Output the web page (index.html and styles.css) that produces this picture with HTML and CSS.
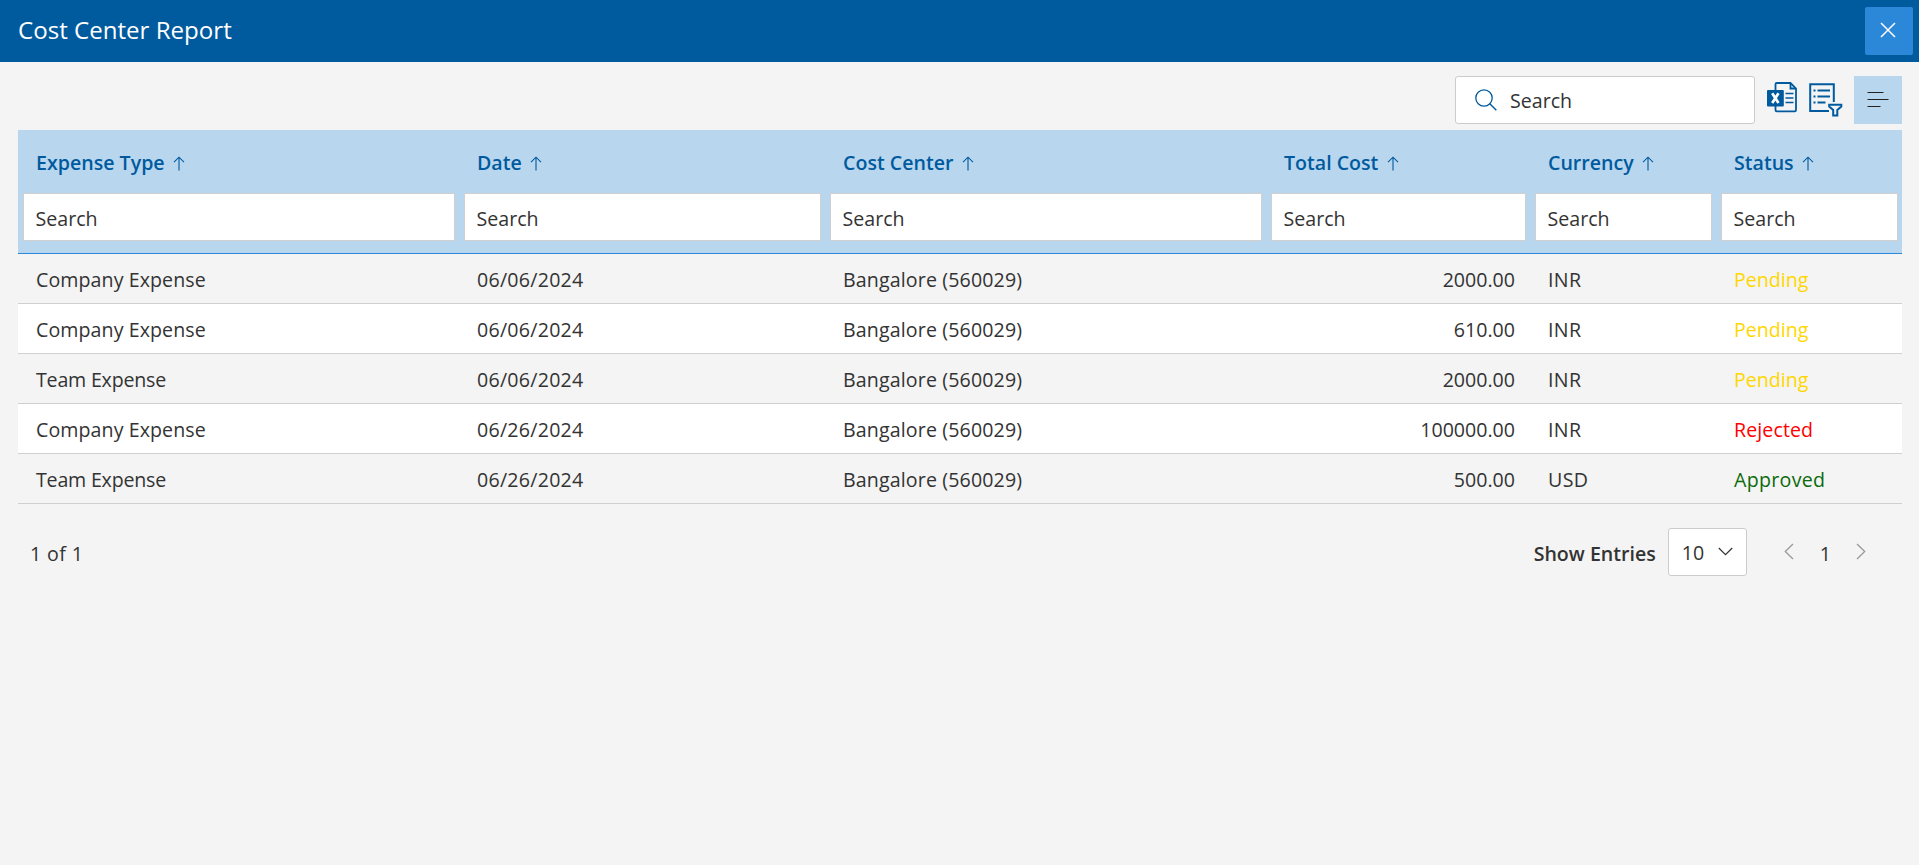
FILE: index.html
```html
<!DOCTYPE html>
<html lang="en">
<head>
<meta charset="utf-8">
<title>Cost Center Report</title>
<link rel="stylesheet" href="styles.css">
</head>
<body>
<svg class="defs" width="0" height="0" aria-hidden="true">
  <symbol id="up" viewBox="0 0 12 15"><path d="M6 14.5V1.2M1 6.2L6 1.2l5 5" fill="none" stroke="currentColor" stroke-width="1.1"/></symbol>
</svg>
<header class="topbar">
  <h1 class="title"><span>Cost Center Report</span></h1>
  <button class="close" aria-label="Close"><svg width="16" height="16" viewBox="0 0 16 16"><path d="M1 1l14 14M15 1L1 15" stroke="#fff" stroke-width="1.5" fill="none"/></svg></button>
</header>
<main class="content">
  <div class="toolbar">
    <div class="searchbox">
      <svg class="lens" width="22" height="22" viewBox="0 0 22 22"><circle cx="9" cy="9" r="8.2" fill="none" stroke="#005a9e" stroke-width="1.3"/><path d="M14.8 14.8L21.3 21.3" stroke="#005a9e" stroke-width="1.4"/></svg>
      <span>Search</span>
    </div>
    <svg class="excel" width="30" height="31" viewBox="0 0 30 31">
      <path d="M8.5 8V2.3Q8.5 1 9.8 1H23.500L29 6.500V28Q29 29.300 27.700 29.300H9.800Q8.500 29.300 8.500 28V24" fill="none" stroke="#005a9e" stroke-width="1.800"/>
      <path d="M23.500 1V6.500H29" fill="none" stroke="#005a9e" stroke-width="1.800"/>
      <rect x="0" y="8" width="16.800" height="16.500" rx="1" fill="#005a9e"/>
      <path d="M5.200 11.300L11.500 21.100M11.500 11.300L5.200 21.100" stroke="#fff" stroke-width="2.700"/>
      <path d="M18.500 11.500H26.500M18.500 16H26.500M18.500 20.500H26.500" stroke="#005a9e" stroke-width="1.700"/>
    </svg>
    <svg class="filter" width="34" height="34" viewBox="0 0 34 34">
      <path d="M20 28H1.200V1.200H24.800V19" fill="none" stroke="#005a9e" stroke-width="2"/>
      <path d="M4.500 7.500h2M8.500 7.500h12.500M4.500 13.500h2M8.500 13.500h12.500M4.500 19.500h2M8.500 19.500h8" stroke="#005a9e" stroke-width="1.800"/>
      <path d="M20.200 21.800H32.300V23.500L28.300 27V32.500H24.200V27L20.200 23.500Z" fill="none" stroke="#005a9e" stroke-width="2"/>
    </svg>
    <button class="menu" aria-label="Menu"><svg width="22" height="16" viewBox="0 0 22 16"><path d="M.5 1.500H16.500M.5 8.500H21.500M.5 15.500H13.500" stroke="#222" stroke-width="1.100"/></svg></button>
  </div>
  <section class="table">
    <div class="thead">
      <div class="hcell"><div class="label"><span>Expense Type</span><svg class="arrow"><use href="#up"/></svg></div><div class="field">Search</div></div>
      <div class="hcell"><div class="label"><span>Date</span><svg class="arrow"><use href="#up"/></svg></div><div class="field">Search</div></div>
      <div class="hcell"><div class="label"><span>Cost Center</span><svg class="arrow"><use href="#up"/></svg></div><div class="field">Search</div></div>
      <div class="hcell"><div class="label"><span>Total Cost</span><svg class="arrow"><use href="#up"/></svg></div><div class="field">Search</div></div>
      <div class="hcell"><div class="label"><span>Currency</span><svg class="arrow"><use href="#up"/></svg></div><div class="field">Search</div></div>
      <div class="hcell"><div class="label"><span>Status</span><svg class="arrow"><use href="#up"/></svg></div><div class="field">Search</div></div>
    </div>
    <div class="row"><span class="company">Company Expense</span><span class="date">06/06/2024</span><span class="center">Bangalore (560029)</span><span class="num">2000.00</span><span class="currency">INR</span><span class="pending">Pending</span></div>
    <div class="row"><span class="company">Company Expense</span><span class="date">06/06/2024</span><span class="center">Bangalore (560029)</span><span class="num">610.00</span><span class="currency">INR</span><span class="pending">Pending</span></div>
    <div class="row"><span class="team">Team Expense</span><span class="date">06/06/2024</span><span class="center">Bangalore (560029)</span><span class="num">2000.00</span><span class="currency">INR</span><span class="pending">Pending</span></div>
    <div class="row"><span class="company">Company Expense</span><span class="date">06/26/2024</span><span class="center">Bangalore (560029)</span><span class="num">100000.00</span><span class="currency">INR</span><span class="rejected">Rejected</span></div>
    <div class="row"><span class="team">Team Expense</span><span class="date">06/26/2024</span><span class="center">Bangalore (560029)</span><span class="num">500.00</span><span class="currency">USD</span><span class="approved">Approved</span></div>
  </section>
  <footer class="pager">
    <span class="count">1 of 1</span>
    <span class="entries">Show Entries</span>
    <div class="select"><span>10</span><svg width="15" height="9" viewBox="0 0 15 9"><path d="M.8 1L7.500 7.700L14.200 1" fill="none" stroke="#333" stroke-width="1.200"/></svg></div>
    <svg class="prev" width="10" height="17" viewBox="0 0 10 17"><path d="M9 1L1.300 8.500L9 16" fill="none" stroke="#999" stroke-width="1.300"/></svg>
    <span class="page">1</span>
    <svg class="next" width="10" height="17" viewBox="0 0 10 17"><path d="M1 1L8.700 8.500L1 16" fill="none" stroke="#999" stroke-width="1.300"/></svg>
  </footer>
</main>
</body>
</html>
```
FILE: styles.css
```css
* { box-sizing: border-box; }
body { margin: 0; height: 865px; background: #f4f4f4; color: #333; font: 19.6px/26px "Segoe UI", "Open Sans", "Noto Sans", sans-serif; overflow: hidden; }
.defs { display: block; }
button { border: 0; padding: 0; display: flex; align-items: center; justify-content: center; }
.topbar { height: 62px; background: #005a9e; display: flex; align-items: center; justify-content: space-between; padding: 0 6px 0 18px; }
.title { margin: 0; padding-bottom: 2px; color: #fff; font-size: 24.1px; font-weight: 400; line-height: 32px; }
.close { width: 48px; height: 48px; background: #2b88d8; border-radius: 2px; padding: 0 2px 2px 0; }
.content { padding: 14px 17px 0 18px; }
.toolbar { height: 48px; display: flex; justify-content: flex-end; margin-bottom: 6px; }
.searchbox { width: 300px; height: 48px; background: #fff; border: 1px solid #ccc; border-radius: 3px; display: flex; align-items: center; padding-left: 19px; gap: 13px; }
.searchbox span { padding-top: 1px; }
.excel { margin: 6px 0 0 12px; }
.filter { margin: 7px 0 0 12px; }
.menu { width: 48px; height: 48px; background: #b8d6ee; margin-left: 11px; padding: 0 0 2px 0; }
.thead, .row { display: grid; grid-template-columns: 441px 366px 441px 264px 186px 186px; }
.thead { height: 124px; background: #b8d6ee; border-bottom: 1px solid #2b88d8; }
.hcell { padding: 0 4px 0 5px; }
.label { height: 63px; padding-left: 13px; display: flex; align-items: center; gap: 8.5px; color: #005a9e; font-weight: 600; padding-top: 3px; }
.arrow { width: 12px; height: 15px; }
.field { height: 48px; background: #fff; border: 1px solid #d2d0ce; padding: 12px 0 0 11.5px; line-height: 26px; }
.row { height: 50px; border-bottom: 1px solid #d2d0ce; line-height: 51px; }
.row:nth-child(odd) { background: #fff; }
.row span { height: 49px; padding-left: 18px; }
.row .num { text-align: right; padding: 0 15px 0 0; }
.company { letter-spacing: .08px; }
.team { letter-spacing: -.2px; }
.date { letter-spacing: .25px; }
.center { letter-spacing: .14px; }
.currency { letter-spacing: .4px; }
.pending { color: #ffd700; }
.rejected { color: #f00; letter-spacing: .1px; }
.approved { color: #0b6a0b; letter-spacing: .3px; }
.pager { display: flex; align-items: center; height: 48px; margin-top: 24px; padding-left: 12px; }
.count { flex: 1; padding-top: 3px; letter-spacing: .4px; }
.entries { font-weight: 600; margin-right: 12px; padding-top: 3px; }
.select { width: 79px; height: 48px; background: #fff; border: 1px solid #ccc; border-radius: 3px; display: flex; align-items: center; padding-left: 13px; gap: 14px; }
.select span { padding-top: 1px; }
.select svg { margin-bottom: 2px; }
.prev { margin: 0 0 2px 37px; }
.page { margin: 0 25px 0 26px; padding-top: 3px; }
.next { margin: 0 36px 2px 0; }
```
